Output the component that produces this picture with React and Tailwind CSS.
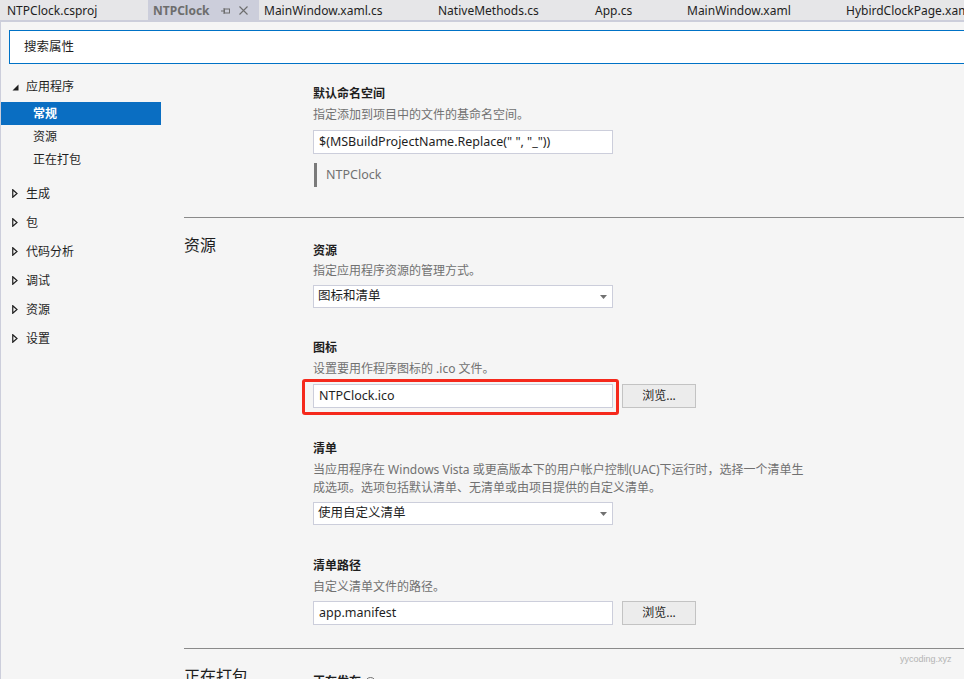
import React from "react";

const FONT = "font-['Noto_Sans','Noto_Sans_CJK_SC',sans-serif]";

function Tab({ children, w, active }) {
  return (
    <div
      className={`h-[20px] pt-[1px] flex items-center shrink-0 whitespace-nowrap ${w} ${
        active ? "bg-[#cccedb] text-[#6d6d6d] font-bold" : "text-[#1e1e1e]"
      }`}
    >
      {children}
    </div>
  );
}

function Label({ children }) {
  return <div className="text-[12px] leading-[18px] font-bold text-[#1e1e1e]">{children}</div>;
}

function Desc({ children, className = "" }) {
  return <div className={`text-[12px] leading-[18px] text-[#717171] whitespace-nowrap ${className}`}>{children}</div>;
}

function TextBox({ children, className = "" }) {
  return (
    <div className={`h-[24px] w-[300px] border border-[#cccedb] bg-white pl-[5px] flex items-center text-[12.5px] text-[#1e1e1e] whitespace-nowrap ${className}`}>
      {children}
    </div>
  );
}

function Select({ children, className = "" }) {
  return (
    <div className={`h-[23px] w-[300px] border border-[#cccedb] bg-white pl-[4px] pr-[4px] flex items-center justify-between text-[12.5px] text-[#1e1e1e] ${className}`}>
      <span>{children}</span>
      <svg width="7" height="4" viewBox="0 0 7 4" className="mr-[1px] mt-[1px]">
        <path d="M0 0 H7 L3.5 4 Z" fill="#717171" />
      </svg>
    </div>
  );
}

function Browse() {
  return (
    <div className="ml-[9px] h-[24px] w-[74px] border border-[#c3c3c3] bg-[#ececec] flex items-center justify-center text-[12px] text-[#1e1e1e]">
      浏览...
    </div>
  );
}

function NavHeader({ children }) {
  return (
    <div className="h-[29px] flex items-center pl-[11px] text-[12px] text-[#1e1e1e]">
      <span className="w-[14px] flex items-center">
        <svg width="6" height="9" viewBox="0 0 6 9">
          <path d="M0.75 0.75 L5 4.5 L0.75 8.25 Z" fill="none" stroke="#1e1e1e" strokeWidth="1.2" />
        </svg>
      </span>
      {children}
    </div>
  );
}

export default function App() {
  return (
    <div className={`w-[964px] h-[679px] overflow-hidden bg-[#f5f5f5] relative ${FONT}`}>
      {/* tab bar */}
      <div className="h-[22px] bg-[#e6e6e8] border-b-2 border-[#cccedb] flex items-start text-[12px]">
        <Tab w="w-[148px] pl-[7px]">NTPClock.csproj</Tab>
        <Tab w="w-[111px] pl-[5px]" active>
          <span>NTPClock</span>
          <svg width="10" height="8" viewBox="0 0 10 8" className="ml-[11px]">
            <path d="M0 4 H3 M3 1 V7" stroke="#6d6d6d" strokeWidth="1" fill="none" />
            <rect x="3.5" y="2" width="5" height="4" stroke="#6d6d6d" strokeWidth="1" fill="none" />
          </svg>
          <svg width="9" height="9" viewBox="0 0 9 9" className="ml-[8px]">
            <path d="M0.5 0.5 L8.5 8.5 M8.5 0.5 L0.5 8.5" stroke="#6d6d6d" strokeWidth="1.1" />
          </svg>
        </Tab>
        <Tab w="w-[174px] pl-[5px]">MainWindow.xaml.cs</Tab>
        <Tab w="w-[157px] pl-[5px]">NativeMethods.cs</Tab>
        <Tab w="w-[92px] pl-[5px]">App.cs</Tab>
        <Tab w="w-[159px] pl-[5px]">MainWindow.xaml</Tab>
        <Tab w="w-[200px] pl-[5px]">HybirdClockPage.xaml</Tab>
      </div>

      <div className="border-l border-[#cccedb] h-full">
        {/* search */}
        <div className="pt-[8px] pl-[8px]">
          <div className="h-[34px] border-[1.5px] border-r-0 border-[#0072c6] bg-white flex items-center pl-[14px] text-[12.5px] text-[#1e1e1e]">
            搜索属性
          </div>
        </div>

        <div className="flex">
          {/* sidebar */}
          <div className="w-[160px] shrink-0 pt-[10px]">
            <div className="h-[26px] flex items-center pl-[11px] text-[12px] text-[#1e1e1e]">
              <span className="w-[14px] flex items-center">
                <svg width="7" height="7" viewBox="0 0 7 7">
                  <path d="M6.5 0.5 V6.5 H0.5 Z" fill="#1e1e1e" />
                </svg>
              </span>
              应用程序
            </div>
            <div className="mt-[2px] h-[23px] bg-[#0a6ec2] text-white font-bold text-[12px] flex items-center pl-[32px]">常规</div>
            <div className="h-[23px] text-[12px] text-[#1e1e1e] flex items-center pl-[32px]">资源</div>
            <div className="h-[23px] text-[12px] text-[#1e1e1e] flex items-center pl-[32px]">正在打包</div>
            <div className="mt-[8px]">
              <NavHeader>生成</NavHeader>
              <NavHeader>包</NavHeader>
              <NavHeader>代码分析</NavHeader>
              <NavHeader>调试</NavHeader>
              <NavHeader>资源</NavHeader>
              <NavHeader>设置</NavHeader>
            </div>
          </div>

          {/* main */}
          <div className="flex-1 pl-[23px]">
            {/* general section (scrolled) */}
            <div className="flex pt-[21px] pb-[30px] border-b border-[#8a8a8a]">
              <div className="w-[129px] shrink-0" />
              <div>
                <Label>默认命名空间</Label>
                <Desc className="mt-[3px]">指定添加到项目中的文件的基命名空间。</Desc>
                <TextBox className="mt-[6px]">$(MSBuildProjectName.Replace(" ", "_"))</TextBox>
                <div className="mt-[9px] h-[24px] flex items-center">
                  <div className="w-[3px] h-[24px] bg-[#7a7a7a] ml-[1px]" />
                  <span className="ml-[9px] text-[12.5px] text-[#717171]">NTPClock</span>
                </div>
              </div>
            </div>

            {/* resources section */}
            <div className="flex pb-[23px] border-b border-[#8a8a8a]">
              <div className="w-[129px] shrink-0 pt-[16px] text-[16px] leading-[22px] text-[#1e1e1e]">资源</div>
              <div className="pt-[24px]">
                <Label>资源</Label>
                <Desc className="mt-[2px]">指定应用程序资源的管理方式。</Desc>
                <Select className="mt-[5px]">图标和清单</Select>

                <div className="mt-[31px]">
                  <Label>图标</Label>
                </div>
                <Desc className="mt-[3px]">设置要用作程序图标的 .ico 文件。</Desc>
                <div className="mt-[6px] flex">
                  <div className="relative">
                    <TextBox>NTPClock.ico</TextBox>
                    <div className="absolute left-[-11px] top-[-5px] right-[-6px] bottom-[-7px] border-[3px] border-[#f5291c] rounded-[3px]" />
                  </div>
                  <Browse />
                </div>

                <div className="mt-[32px]">
                  <Label>清单</Label>
                </div>
                <Desc className="mt-[3px]">
                  当应用程序在 Windows Vista 或更高版本下的用户帐户控制(UAC)下运行时，选择一个清单生
                  <br />
                  成选项。选项包括默认清单、无清单或由项目提供的自定义清单。
                </Desc>
                <Select className="mt-[5px]">使用自定义清单</Select>

                <div className="mt-[32px]">
                  <Label>清单路径</Label>
                </div>
                <Desc className="mt-[3px]">自定义清单文件的路径。</Desc>
                <div className="mt-[5px] flex">
                  <TextBox>app.manifest</TextBox>
                  <Browse />
                </div>
              </div>
            </div>

            {/* packaging section */}
            <div className="flex">
              <div className="w-[129px] shrink-0 pt-[16px] text-[16px] leading-[22px] text-[#1e1e1e]">正在打包</div>
              <div className="pt-[24px] flex items-center">
                <Label>正在发布</Label>
                <span className="ml-[4px] w-[11px] h-[11px] rounded-full border border-[#717171] text-[8px] leading-[9px] text-center text-[#717171]">?</span>
              </div>
            </div>
          </div>
        </div>
      </div>

      <div className="absolute left-[900px] top-[653px] text-[9px] text-[#b4b4b4] font-['Liberation_Sans',sans-serif]">yycoding.xyz</div>
    </div>
  );
}
